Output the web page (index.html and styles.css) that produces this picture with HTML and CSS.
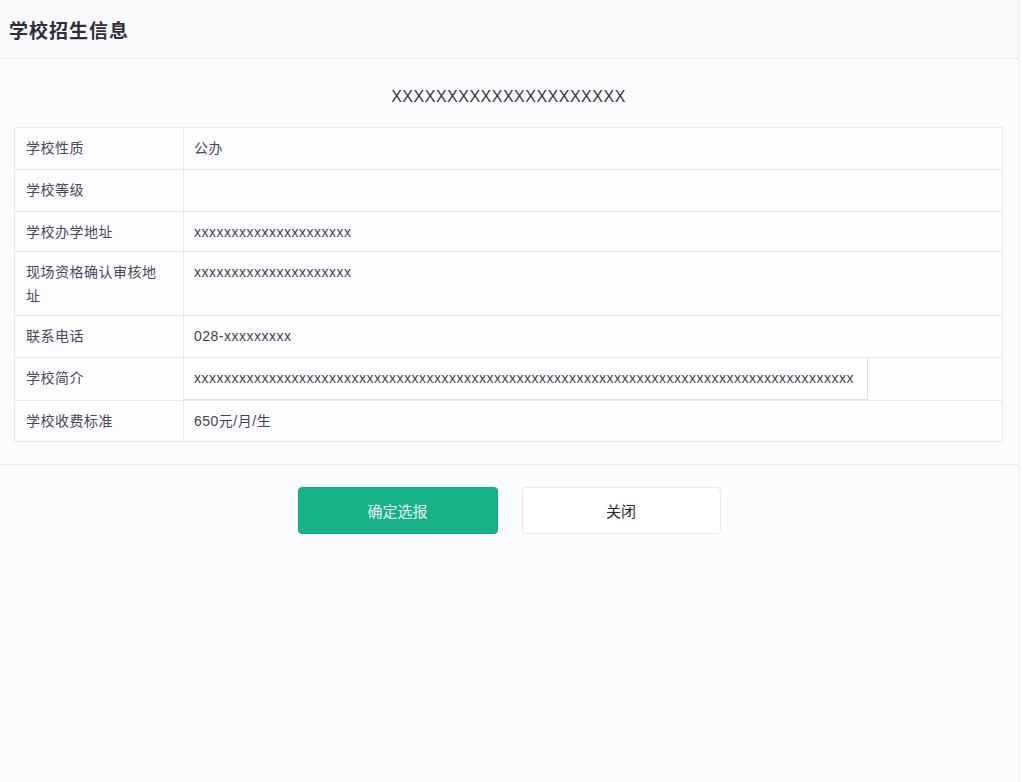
FILE: index.html
```html
<!DOCTYPE html>
<html lang="zh">
<head>
<meta charset="utf-8">
<title>学校招生信息</title>
<link rel="stylesheet" href="styles.css">
</head>
<body>
<div class="panel">
  <div class="header">学校招生信息</div>
  <div class="content">
    <div class="school-name">XXXXXXXXXXXXXXXXXXXXX</div>
    <table class="info">
      <tr class="r42"><td class="label">学校性质</td><td class="value">公办</td></tr>
      <tr class="r42"><td class="label">学校等级</td><td class="value"></td></tr>
      <tr class="r40"><td class="label">学校办学地址</td><td class="value">xxxxxxxxxxxxxxxxxxxxx</td></tr>
      <tr class="r64"><td class="label">现场资格确认审核地址</td><td class="value">xxxxxxxxxxxxxxxxxxxxx</td></tr>
      <tr class="r42"><td class="label">联系电话</td><td class="value">028-xxxxxxxxx</td></tr>
      <tr class="r43"><td class="label">学校简介</td><td class="value box-cell"><div class="intro-box">xxxxxxxxxxxxxxxxxxxxxxxxxxxxxxxxxxxxxxxxxxxxxxxxxxxxxxxxxxxxxxxxxxxxxxxxxxxxxxxxxxxxxxxx</div></td></tr>
      <tr class="r41"><td class="label">学校收费标准</td><td class="value">650元/月/生</td></tr>
    </table>
  </div>
  <div class="footer">
    <button class="btn btn-primary">确定选报</button>
    <button class="btn btn-default">关闭</button>
  </div>
</div>
</body>
</html>
```

FILE: styles.css
```css
* { box-sizing: border-box; }
html, body {
  margin: 0;
  padding: 0;
  background: #fbfcfe;
  font-family: "Liberation Sans", "Noto Sans CJK SC", sans-serif;
  color: #3b3540;
}
.panel {
  width: 1019px;
  height: 782px;
  border-right: 1px solid #eceef2;
  background: #fbfcfe;
  display: flex;
  flex-direction: column;
}
.header {
  height: 59px;
  padding: 0 9px;
  display: flex;
  align-items: center;
  font-size: 19px;
  letter-spacing: 1px;
  font-weight: bold;
  color: #332c3a;
  background: #f9fafc;
  border-bottom: 1px solid #e6e9ef;
}
.content {
  padding: 0 15px 22px 14px;
  border-bottom: 1px solid #e8ebf0;
}
.school-name {
  height: 68px;
  display: flex;
  align-items: center;
  justify-content: center;
  font-size: 16px;
  letter-spacing: 0.5px;
  color: #3d3046;
  padding-top: 8px;
}
.info {
  width: 100%;
  border-collapse: collapse;
  font-size: 14px;
  letter-spacing: 0.5px;
  color: #4e4656;
  background: #fcfdfe;
}
.info td {
  border: 1px solid #e6e8ed;
  vertical-align: top;
  padding: 8px 10px 0 11px;
  line-height: 24px;
}
.info td.label {
  width: 169px;
  padding-right: 20px;
}
.info td.value { color: #4a3f52; padding-left: 10px; }
.r42 { height: 42px; }
.r40 { height: 40px; }
.r64 { height: 64px; }
.r43 { height: 43px; }
.r41 { height: 41px; }
.info td.box-cell {
  padding: 0;
}
.intro-box {
  width: 685px;
  height: 43px;
  margin: -1px 0 -1px -1px;
  border: 1px solid #dcdfe5;
  background: #ffffff;
  padding: 8px 8px 0 10px;
  white-space: nowrap;
  overflow: hidden;
  line-height: 24px;
}
.footer {
  padding-top: 22px;
  display: flex;
  justify-content: center;
  gap: 24px;
}
.btn {
  width: 200px;
  height: 47px;
  border-radius: 4px;
  font-family: "Liberation Sans", "Noto Sans CJK SC", sans-serif;
  font-size: 15px;
  cursor: pointer;
}
.btn-primary {
  background: #17b18a;
  border: 1px solid #14a882;
  color: #e8f7f1;
}
.btn-default {
  width: 199px;
  background: #ffffff;
  border: 1px solid #e6e9ee;
  color: #2f2837;
}
```
